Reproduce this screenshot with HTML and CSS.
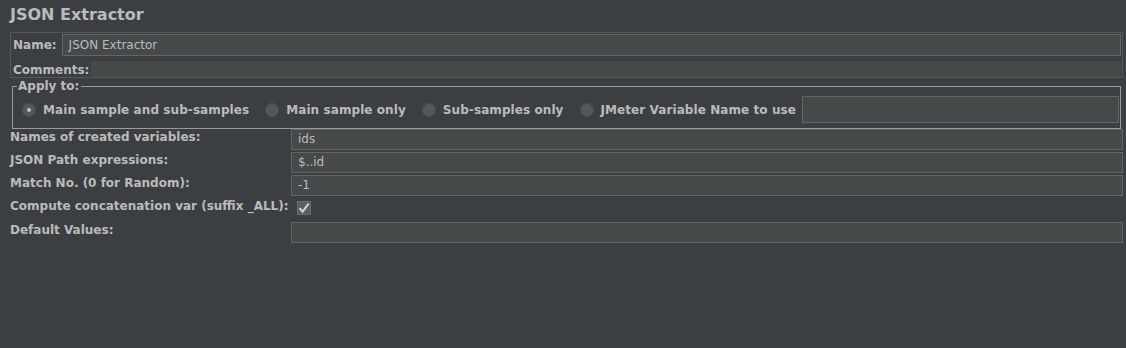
FILE: index.html
```html
<!DOCTYPE html>
<html>
<head>
<meta charset="utf-8">
<link rel="stylesheet" href="styles.css">
</head>
<body>
<div class="page">
  <h1 class="title">JSON Extractor</h1>
  <div class="named">
    <div class="nrow">
      <span class="lbl">Name:</span>
      <div class="field name-field">JSON Extractor</div>
    </div>
    <div class="nrow crow">
      <span class="lbl">Comments:</span>
      <div class="comment-field"></div>
    </div>
  </div>
  <fieldset class="apply">
    <legend>Apply to:</legend>
    <div class="radios">
      <label class="radio"><span class="dot on"></span>Main sample and sub-samples</label>
      <label class="radio"><span class="dot"></span>Main sample only</label>
      <label class="radio"><span class="dot"></span>Sub-samples only</label>
      <label class="radio"><span class="dot"></span>JMeter Variable Name to use</label>
      <div class="field var-field"></div>
    </div>
  </fieldset>
  <div class="form">
    <span class="lbl">Names of created variables:</span>
    <div class="field">ids</div>
    <span class="lbl">JSON Path expressions:</span>
    <div class="field">$..id</div>
    <span class="lbl">Match No. (0 for Random):</span>
    <div class="field">-1</div>
    <span class="lbl">Compute concatenation var (suffix _ALL):</span>
    <div class="chkcell"><span class="chk"><svg width="14" height="14" viewBox="0 0 14 14"><path d="M2.5 7.2 L5.6 10.6 L11.6 2.6" fill="none" stroke="#d4d4d4" stroke-width="2"/></svg></span></div>
    <span class="lbl">Default Values:</span>
    <div class="field"></div>
  </div>
</div>
</body>
</html>
```

FILE: styles.css
```css
html, body {
  margin: 0;
  padding: 0;
  background: #3c3f41;
}
body {
  width: 1126px;
  height: 348px;
  overflow: hidden;
  font-family: "DejaVu Sans", "Liberation Sans", sans-serif;
  color: #bbbbbb;
}
.page {
  padding: 4px 3px 0 10px;
  display: flex;
  flex-direction: column;
}
.title {
  margin: 0;
  font-size: 16px;
  font-weight: bold;
  line-height: 22px;
  height: 28px;
  color: #bbbbbb;
}
.lbl {
  font-size: 12px;
  font-weight: bold;
  line-height: 14px;
  white-space: nowrap;
  color: #bbbbbb;
}
.field {
  box-sizing: border-box;
  height: 21px;
  background: #45494a;
  border: 1px solid #646464;
  font-size: 12px;
  line-height: 19px;
  padding-left: 6px;
  color: #bbbbbb;
}
.named {
  box-sizing: border-box;
  width: 1113px;
  height: 46px;
  border: 1px solid #55585a;
  padding: 1px 1px 0 2px;
  display: flex;
  flex-direction: column;
}
.nrow {
  display: flex;
  align-items: center;
  gap: 5px;
}
.name-field {
  flex: 1;
  height: 22px;
  line-height: 20px;
}
.crow {
  margin-top: 4px;
  gap: 2px;
}
.crow .lbl {
  padding-top: 3px;
}
.comment-field {
  flex: 1;
  height: 16px;
  background: #45494a;
}
.apply {
  box-sizing: border-box;
  width: 1109px;
  height: 50px;
  margin: 1px 0 0 2px;
  padding: 0 1px 0 9px;
  border: 1px solid #9a9a9a;
  border-radius: 0;
}
.apply legend {
  font-size: 12px;
  font-weight: bold;
  line-height: 14px;
  padding: 0 2px 0 1px;
  margin-left: -5px;
  color: #bbbbbb;
}
.radios {
  display: flex;
  align-items: center;
  height: 27px;
  margin-top: 3px;
}
.radio {
  display: flex;
  align-items: center;
  font-size: 12px;
  font-weight: bold;
  letter-spacing: 0.08px;
  white-space: nowrap;
  margin-right: 16px;
}
.dot {
  box-sizing: border-box;
  width: 14px;
  height: 14px;
  border-radius: 50%;
  background: #53575a;
  border: 1px solid #4c5052;
  margin-right: 7px;
  display: flex;
  align-items: center;
  justify-content: center;
}
.dot.on::after {
  content: "";
  width: 4px;
  height: 4px;
  border-radius: 50%;
  background: #bdbdbd;
}
.var-field {
  flex: 1;
  height: 27px;
  margin-left: -10px;
}
.form {
  display: grid;
  grid-template-columns: 281px 1fr;
  row-gap: 2px;
  margin-top: 0;
}
.form .lbl {
  align-self: start;
  padding-top: 1px;
}
.chkcell {
  height: 22px;
  display: flex;
  align-items: center;
  padding-left: 6px;
}
.chk {
  box-sizing: border-box;
  width: 14px;
  height: 14px;
  background: #5b5e60;
  border: 1px solid #6a6d70;
  display: block;
  margin-top: -2px;
}
.chk svg {
  display: block;
  margin: -1px 0 0 -1px;
}
```
